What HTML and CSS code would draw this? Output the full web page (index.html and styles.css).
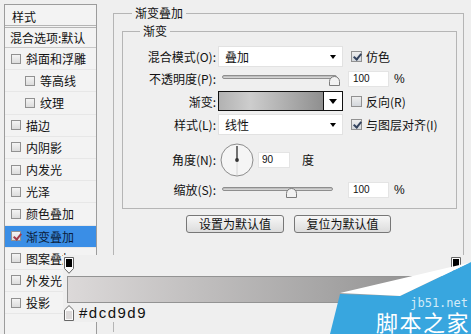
FILE: index.html
```html
<!DOCTYPE html>
<html lang="zh-CN">
<head>
    <meta charset="UTF-8">
    <title>图层样式 - 渐变叠加</title>
    <link rel="stylesheet" href="styles.css">
</head>
<body>
    <div class="dialog">
        <aside class="style-list">
            <div class="list-head">样式</div>
            <div class="list-blend">混合选项:默认</div>
            <ul class="list-items">
                <li><span class="cb"></span>斜面和浮雕</li>
                <li class="sub"><span class="cb"></span>等高线</li>
                <li class="sub"><span class="cb"></span>纹理</li>
                <li><span class="cb"></span>描边</li>
                <li><span class="cb"></span>内阴影</li>
                <li><span class="cb"></span>内发光</li>
                <li><span class="cb"></span>光泽</li>
                <li><span class="cb"></span>颜色叠加</li>
                <li class="active"><span class="cb checked"></span>渐变叠加</li>
                <li><span class="cb"></span>图案叠加</li>
                <li><span class="cb"></span>外发光</li>
                <li><span class="cb"></span>投影</li>
            </ul>
        </aside>

        <main class="panel">
            <fieldset class="group outer">
                <legend>渐变叠加</legend>
                <fieldset class="group inner">
                    <legend>渐变</legend>

                    <div class="row r1">
                        <span class="lbl">混合模式(O):</span>
                        <div class="select"><span>叠加</span><i class="arrow"></i></div>
                        <label class="check"><span class="cb big checked"></span>仿色</label>
                    </div>

                    <div class="row r2">
                        <span class="lbl">不透明度(P):</span>
                        <div class="slider opacity">
                            <svg class="thumb" style="left:106px" width="11" height="11" viewBox="0 0 11 11"><path d="M0.5 10.5V6.5A5 5 0 0 1 10.5 6.5V10.5Z" fill="#f2f2f2" stroke="#7c7c7c"/></svg>
                        </div>
                        <div class="value"><span class="num">100</span><span class="unit">%</span></div>
                    </div>

                    <div class="row r3">
                        <span class="lbl">渐变:</span>
                        <div class="grad-pick"><span class="grad-fill"></span><span class="grad-btn"><i class="arrow big"></i></span></div>
                        <label class="check"><span class="cb big"></span>反向(R)</label>
                    </div>

                    <div class="row r4">
                        <span class="lbl">样式(L):</span>
                        <div class="select"><span>线性</span><i class="arrow"></i></div>
                        <label class="check"><span class="cb big checked"></span>与图层对齐(I)</label>
                    </div>

                    <div class="row r5">
                        <span class="lbl">角度(N):</span>
                        <div class="angle">
                            <svg class="dial" width="34" height="34" viewBox="0 0 34 34">
                                <circle cx="17" cy="17" r="16" fill="#f5f5f5" stroke="#8c8c8c"/>
                                <line x1="17" y1="17" x2="17" y2="32" stroke="#d4d4d4"/>
                                <line x1="17" y1="17" x2="17" y2="3" stroke="#3a3a3a" stroke-width="1.4"/>
                                <circle cx="17" cy="17" r="1.9" fill="#333"/>
                            </svg>
                            <span class="num deg">90</span>
                            <span class="unit-deg">度</span>
                        </div>
                    </div>

                    <div class="row r6">
                        <span class="lbl">缩放(S):</span>
                        <div class="slider scale">
                            <svg class="thumb" style="left:63px" width="11" height="11" viewBox="0 0 11 11"><path d="M0.5 10.5V6.5A5 5 0 0 1 10.5 6.5V10.5Z" fill="#f2f2f2" stroke="#7c7c7c"/></svg>
                        </div>
                        <div class="value"><span class="num">100</span><span class="unit">%</span></div>
                    </div>
                </fieldset>

                <div class="buttons">
                    <button class="btn">设置为默认值</button>
                    <button class="btn narrow">复位为默认值</button>
                </div>
            </fieldset>
        </main>
    </div>

    <!-- gradient editor strip pasted over the dialog -->
    <div class="grad-editor">
        <div class="stops">
            <svg width="10" height="17" viewBox="0 0 10 17"><path d="M0.5 0.5H9.5V11.5L5 16.3L0.5 11.5Z" fill="#fafafa" stroke="#666"/><rect x="2" y="2" width="6" height="8" fill="#000"/></svg>
            <svg width="10" height="17" viewBox="0 0 10 17"><path d="M0.5 0.5H9.5V11.5L5 16.3L0.5 11.5Z" fill="#fafafa" stroke="#666"/><rect x="2" y="2" width="6" height="8" fill="#000"/></svg>
        </div>
        <div class="grad-bar"></div>
        <div class="stop-info">
            <svg width="10" height="16" viewBox="0 0 10 16"><path d="M5 0.6L9.5 5V15.5H0.5V5Z" fill="#fafafa" stroke="#666"/><rect x="2" y="6" width="6" height="8" fill="#dcd9d9"/></svg>
            <span class="hex">#dcd9d9</span>
        </div>
    </div>

    <div class="watermark">
        <svg class="wm-shape" width="143" height="74" viewBox="0 0 143 74">
            <polygon points="2,74 12,34 72,36 143,2 143,74" fill="#38a6df"/>
            <polygon points="12,33 140,3 143,2 72,36" fill="#fff"/>
        </svg>
        <div class="wm-text">
            <span class="wm-url">jb51.net</span>
            <span class="wm-name">脚本之家</span>
        </div>
    </div>
</body>
</html>
```

FILE: styles.css
```css
* {
    margin: 0;
    padding: 0;
    box-sizing: border-box;
}

body {
    width: 471px;
    height: 334px;
    overflow: hidden;
    position: relative;
    background: #efefef;
    font-family: "Noto Sans CJK SC", sans-serif;
    font-size: 12px;
    color: #111;
}

.dialog {
    display: flex;
    height: 100%;
    padding: 4px 0 0 4px;
}

/* left column: list of styles */
.style-list {
    flex: none;
    width: 93px;
    height: 330px;
    overflow: hidden;
    border: 1px solid #9c9c9c;
    border-bottom: none;
    background: #f3f3f3;
}

.list-head {
    height: 23px;
    line-height: 23px;
    padding-left: 7px;
    border-bottom: 3px double #b4b4b4;
}

.list-blend {
    height: 20px;
    line-height: 20px;
    padding-left: 5px;
    white-space: nowrap;
    border-bottom: 1px solid #c8c8c8;
}

.list-items {
    list-style: none;
}

.list-items li {
    display: flex;
    align-items: center;
    gap: 5px;
    height: 22.2px;
    padding-left: 6px;
    white-space: nowrap;
    overflow: hidden;
    border-bottom: 1px solid #e7e7e7;
}

.list-items li.sub {
    padding-left: 20px;
}

.list-items li.active {
    background: #3a8ee6;
    color: #0b1d3b;
}

.cb {
    position: relative;
    flex: none;
    width: 10px;
    height: 10px;
    border: 1px solid #919191;
    background: linear-gradient(#f4f4f4, #dcdcdc);
}

.cb.big {
    width: 11px;
    height: 11px;
    background: linear-gradient(#eeeeee, #d3d7dc);
}

.cb.checked::after {
    content: "";
    position: absolute;
    left: 3px;
    top: 0;
    width: 3px;
    height: 6px;
    border: solid #34435e;
    border-width: 0 2px 2px 0;
    transform: rotate(40deg);
}

.list-items li.active .cb.checked::after {
    border-color: #a33a4a;
}

/* right side */
.panel {
    flex: none;
    width: 351px;
    margin-left: 16px;
}

.group {
    border: 1px solid #b5b5b5;
    min-inline-size: 0;
}

.group legend {
    padding: 0 3px;
    line-height: 14px;
    font-size: 12px;
}

.outer {
    height: 326px;
    margin-top: 2px;
    border-bottom: none;
}

.outer > legend {
    margin-left: 18px;
}

.inner {
    margin: 4px 6px 0 8px;
    padding: 8px 0 10px 0;
}

.inner > legend {
    margin-left: 17px;
}

.row {
    display: grid;
    grid-template-columns: 95px 130px 1fr;
    align-items: center;
}

.r1 { height: 21px; }
.r2 { height: 17px; margin-top: 3px; }
.r3 { height: 20px; margin-top: 4px; }
.r4 { height: 21px; margin-top: 3px; }
.r5 { height: 35px; margin-top: 7px; }
.r6 { height: 17px; margin-top: 4px; }

.lbl {
    text-align: right;
    padding-right: 2px;
    white-space: nowrap;
}

.select {
    display: flex;
    align-items: center;
    justify-content: space-between;
    width: 125px;
    height: 21px;
    padding: 0 6px;
    background: #fff;
    border: 1px solid #e2e2e2;
}

.arrow {
    width: 0;
    height: 0;
    border-left: 3px solid transparent;
    border-right: 3px solid transparent;
    border-top: 4px solid #000;
}

.arrow.big {
    border-left-width: 4px;
    border-right-width: 4px;
    border-top-width: 5px;
}

.check {
    display: flex;
    align-items: center;
    gap: 4px;
    margin-left: 3px;
    white-space: nowrap;
}

.slider {
    position: relative;
    align-self: start;
    height: 4px;
    margin-left: 4px;
    border: 1px solid #8e8e8e;
    border-radius: 2px;
    background: linear-gradient(#b4b4b4, #dedede);
}

.slider.opacity {
    width: 115px;
    margin-top: 5px;
}

.slider.scale {
    width: 111px;
    margin-top: 6px;
}

.thumb {
    position: absolute;
    top: -1px;
}

.value {
    display: flex;
    align-items: center;
}

.num {
    display: block;
    width: 41px;
    height: 16px;
    padding-left: 4px;
    line-height: 14px;
    background: #fff;
    border: 1px solid #e4e4e4;
    font-family: "Liberation Sans", sans-serif;
    font-size: 10px;
}

.unit {
    margin-left: 5px;
    font-family: "Liberation Sans", sans-serif;
    font-size: 12px;
}

.grad-pick {
    display: flex;
    width: 125px;
    height: 20px;
    border: 1px solid #111;
}

.grad-fill {
    flex: 1;
    background: linear-gradient(to right, #b2b2b2, #cdcdcd 30%, #8f8f8f);
}

.grad-btn {
    display: flex;
    align-items: center;
    justify-content: center;
    width: 19px;
    background: #fff;
    border-left: 1px solid #111;
}

.angle {
    grid-column: 2 / 4;
    display: flex;
    align-items: center;
}

.dial {
    margin-left: 2px;
}

.num.deg {
    width: 32px;
    margin-left: 4px;
    padding-left: 3px;
}

.unit-deg {
    margin-left: 12px;
}

.buttons {
    display: flex;
    justify-content: center;
    gap: 10px;
    margin-top: 6px;
}

.btn {
    width: 98px;
    height: 18px;
    padding: 0;
    line-height: 16px;
    font-family: "Noto Sans CJK SC", sans-serif;
    font-size: 12px;
    color: #111;
    border: 1px solid #777;
    border-radius: 3px;
    background: linear-gradient(#f7f7f7, #dcdcdc);
}

.btn.narrow {
    width: 97px;
}

/* gradient editor strip */
.grad-editor {
    position: absolute;
    left: 63px;
    top: 255px;
    width: 408px;
    height: 67px;
    padding-top: 2px;
    background: #efefef;
}

.stops {
    display: flex;
    justify-content: space-between;
    height: 18px;
    padding: 0 10px 0 1px;
}

.grad-bar {
    width: 393px;
    height: 27px;
    margin: 1px 0 0 4px;
    border: 1px solid #939393;
    background: linear-gradient(to right, #dcd9d9, #8a8a8a);
}

.stop-info {
    display: flex;
    align-items: center;
    gap: 5px;
    margin-top: 2px;
    padding-left: 1px;
}

.hex {
    font-family: "Liberation Sans", sans-serif;
    font-size: 15px;
    line-height: 16px;
    letter-spacing: 1.5px;
    color: #111;
}

/* site watermark */
.watermark {
    position: absolute;
    right: 0;
    bottom: 0;
    width: 143px;
    height: 74px;
    overflow: hidden;
}

.wm-shape {
    position: absolute;
    left: 0;
    top: 0;
}

.wm-text {
    position: relative;
    display: flex;
    flex-direction: column;
    align-items: flex-end;
    justify-content: flex-end;
    gap: 1px;
    height: 100%;
    padding: 0 1px 1px 0;
}

.wm-url {
    margin-right: 2px;
    font-family: "DejaVu Sans Mono", monospace;
    font-size: 12px;
    line-height: 12px;
    color: #d3ebf8;
}

.wm-name {
    font-size: 22px;
    line-height: 23px;
    letter-spacing: 1.5px;
    color: #fff;
}
```
